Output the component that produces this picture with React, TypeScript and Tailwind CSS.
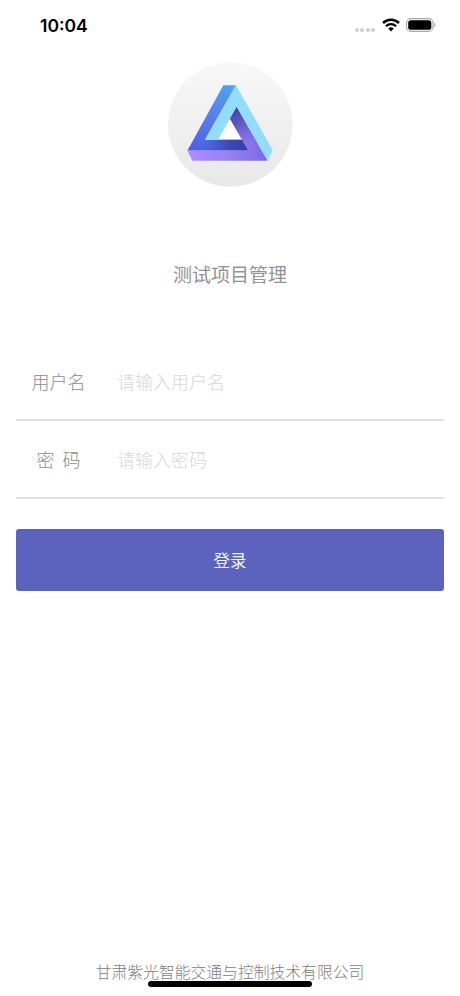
import React from "react";

function StatusBar() {
  return (
    <div className="flex h-[50px] items-center justify-between pl-10 pr-6">
      <span className="mt-[1px] font-['Inter','Liberation_Sans',sans-serif] text-[17.5px] font-semibold leading-none text-black">
        10:04
      </span>
      <div className="flex items-center">
        <div className="mt-[9px] flex gap-[1.5px]">
          <i className="h-1 w-[4px] rounded-full bg-[#cfcfcf]" />
          <i className="h-1 w-[4px] rounded-full bg-[#cfcfcf]" />
          <i className="h-1 w-[4px] rounded-full bg-[#cfcfcf]" />
          <i className="h-1 w-[4px] rounded-full bg-[#cfcfcf]" />
        </div>
        <svg className="ml-[7px] h-[14px] w-[18px]" viewBox="0 0 18 14" fill="none">
          <path d="M1 5a11.4 11.4 0 0 1 16 0" stroke="#000" strokeWidth="2.5" />
          <path d="M3.9 8.2a7.2 7.2 0 0 1 10.2 0" stroke="#000" strokeWidth="2.3" />
          <path d="M6.2 10.6a4 4 0 0 1 5.6 0L9 13.5z" fill="#000" />
        </svg>
        <svg className="ml-[6px] h-[14px] w-[30px]" viewBox="0 0 30 14" fill="none">
          <rect x="0.6" y="0.6" width="26.3" height="12.8" rx="4" stroke="#a8a8a8" strokeWidth="1.1" />
          <rect x="2.2" y="2.2" width="23.1" height="9.6" rx="2.6" fill="#000" />
          <path d="M28.2 4.8c1.7.6 1.7 3.8 0 4.4z" fill="#a8a8a8" />
        </svg>
      </div>
    </div>
  );
}

function Logo() {
  return (
    <svg className="h-[125px] w-[125px]" viewBox="24 21 375 375">
      <defs>
        <linearGradient id="disc" x1="0" y1="0" x2="0" y2="1">
          <stop offset="0" stopColor="#f8f8f8" />
          <stop offset="1" stopColor="#e8e8e8" />
        </linearGradient>
        <linearGradient id="left" gradientUnits="userSpaceOnUse" x1="215" y1="91" x2="110" y2="286">
          <stop offset="0" stopColor="#47a6f4" />
          <stop offset="0.45" stopColor="#5a82e8" />
          <stop offset="1" stopColor="#4c62e4" />
        </linearGradient>
        <linearGradient id="leftShade" gradientUnits="userSpaceOnUse" x1="130" y1="0" x2="264" y2="0">
          <stop offset="0" stopColor="#333fa6" stopOpacity="0" />
          <stop offset="0.6" stopColor="#333fa6" stopOpacity="0.8" />
          <stop offset="1" stopColor="#333fa6" />
        </linearGradient>
        <linearGradient id="base" gradientUnits="userSpaceOnUse" x1="85" y1="0" x2="323" y2="0">
          <stop offset="0" stopColor="#b18cff" />
          <stop offset="0.5" stopColor="#9682f4" />
          <stop offset="1" stopColor="#7c68e4" />
        </linearGradient>
        <linearGradient id="baseShade" gradientUnits="userSpaceOnUse" x1="220" y1="165" x2="272" y2="262">
          <stop offset="0" stopColor="#3f45a8" />
          <stop offset="0.4" stopColor="#4f4db4" stopOpacity="0.75" />
          <stop offset="1" stopColor="#6a5cc8" stopOpacity="0" />
        </linearGradient>
      </defs>
      <circle cx="211" cy="208.5" r="187" fill="url(#disc)" />
      <path d="M210 188L250 254H172z" fill="#fdfdfd" />
      <path d="M190 91H228L135 254H247L266 287H82z" fill="url(#left)" />
      <path d="M135 254H247L266 287H116z" fill="url(#leftShade)" />
      <path d="M82 286H264L209 190L230 155L323 317H97z" fill="url(#base)" />
      <path d="M264 286L209 190L230 155L304 286z" fill="url(#baseShade)" />
      <path d="M228 91L338 285L323 317L230 155L174 254H135z" fill="#92dcff" />
    </svg>
  );
}

function Field({
  label,
  type,
  placeholder,
}: {
  label: string;
  type: string;
  placeholder: string;
}) {
  return (
    <label className="flex h-[78px] items-center border-b-2 border-[#e0e0e0]">
      <span className="w-[85px] whitespace-pre text-center text-[18px] text-[#8c8c8c]">
        {label}
      </span>
      <input
        type={type}
        placeholder={placeholder}
        className="ml-4 min-w-0 flex-1 bg-transparent text-[18px] outline-none placeholder:text-[#d8d8d8]"
      />
    </label>
  );
}

export default function App() {
  return (
    <div className="flex h-[996px] w-[460px] flex-col bg-white font-['Noto_Sans_CJK_SC',sans-serif] font-light">
      <StatusBar />
      <div className="mt-3 flex justify-center">
        <Logo />
      </div>
      <h1 className="mt-[73px] text-center text-[19px] font-normal leading-7 text-[#939393]">
        测试项目管理
      </h1>
      <form className="mt-[55px] px-4" onSubmit={(e) => e.preventDefault()}>
        <Field label="用户名" type="text" placeholder="请输入用户名" />
        <Field label="密  码" type="password" placeholder="请输入密码" />
        <button className="mt-[30px] h-[62px] w-full rounded-[3px] bg-[#5c63bc] text-[16.5px] font-normal text-[#eef0ff]">
          登录
        </button>
      </form>
      <footer className="relative mt-auto h-[38px] text-center text-[15.8px] leading-7 text-[#808080]">
        甘肃紫光智能交通与控制技术有限公司
        <div className="absolute bottom-[9px] left-[148px] h-[6px] w-[164px] rounded-full bg-black" />
      </footer>
    </div>
  );
}
